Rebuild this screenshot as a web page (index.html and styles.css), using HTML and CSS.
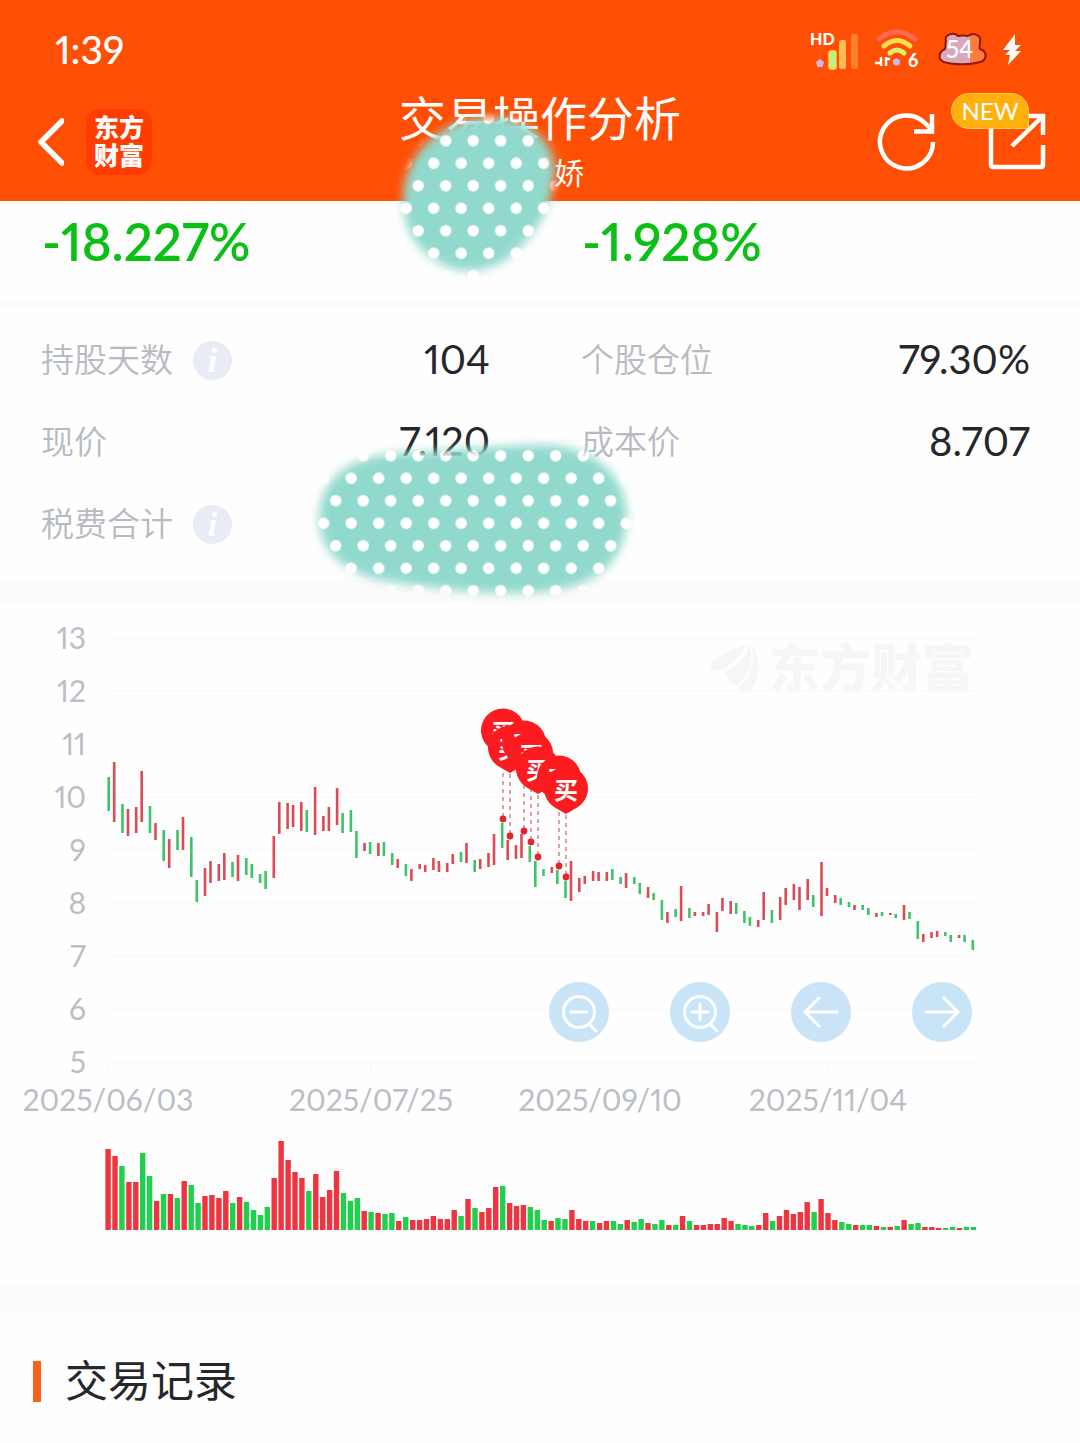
FILE: index.html
```html
<!DOCTYPE html>
<html lang="zh-CN">

<head>
  <meta charset="UTF-8" />
  <meta name="viewport" content="width=device-width, initial-scale=1.0" />
  <title>交易操作分析</title>
  <link rel="stylesheet" href="styles.css">
</head>

<body>
  <header class="header">
    <div class="status">
      <span class="time">1:39</span>
      <div class="status-icons">
        <svg class="signal" width="50" height="44" viewBox="0 0 50 44">
          <text class="hd" x="0" y="17">HD</text>
          <path d="M10 31l4 3-1.500 5h-5l-1.500-5z" fill="#c9b8e8" />
          <rect x="19" y="23" width="7" height="18" rx="2" fill="#b4f58c" stroke="#ffd640" stroke-width="1.500" />
          <rect x="29" y="12" width="7" height="29" rx="2" fill="#ffbe55" />
          <rect x="41" y="6" width="7" height="35" rx="2" fill="#ff7f2a" />
        </svg>
        <svg class="wifi" width="46" height="44" viewBox="0 0 46 44">
          <g fill="none" stroke-linecap="round" stroke-width="5">
            <path d="M5 11q17-14 36 0" stroke="#ff6a58" />
            <path d="M10 18q13-11 26 0" stroke="#ffe14d" />
            <path d="M16 25q7-6 14 0" stroke="#d8f06a" />
          </g>
          <path d="M7 29v9M1 35h5M12 38v-9M12 31h4" fill="none" stroke="#fff" stroke-width="2.500" />
          <circle cx="22.500" cy="34" r="3.500" fill="#c9b8e8" />
          <text class="six" x="34" y="39">6</text>
        </svg>
        <svg class="battery" width="50" height="36" viewBox="0 0 50 36">
          <path d="M8 9C6 2 16 0 20 4q5-1 10 0c5-4 14-1 12 6 0 3-1 5 0 7 8 3 7 11 0 13-10 3-26 3-36 0-6-2-6-10 1-13 1-3 0-5 1-8z" fill="#ff7a3c" />
          <path d="M8 9C6 2 16 0 20 4q5-1 12 0v28q-16 1-26-2c-6-2-6-10 1-13 1-3 0-5 1-8z" fill="#d9a9bb" />
          <path d="M8 9C6 2 16 0 20 4q5-1 10 0c5-4 14-1 12 6 0 3-1 5 0 7 8 3 7 11 0 13-10 3-26 3-36 0-6-2-6-10 1-13 1-3 0-5 1-8z" fill="none" stroke="#8c1a08" stroke-width="2" />
          <text class="level" x="8" y="26">54</text>
        </svg>
        <svg class="bolt" width="20" height="32" viewBox="0 0 20 32">
          <path d="M13 0L1 16h7l-5 5h5L6 31 19 17h-6l6-6h-6z" fill="#fff" />
        </svg>
      </div>
    </div>

    <nav class="nav">
      <div class="nav-left">
        <button class="icon-btn" aria-label="返回">
          <svg width="30" height="50" viewBox="0 0 30 50">
            <path d="M28 4L7 25l21 21" fill="none" stroke="#fff" stroke-width="5.500" stroke-linecap="round" stroke-linejoin="round" />
          </svg>
        </button>
        <a class="logo" href="#">东方<br>财富</a>
      </div>
      <div class="nav-title">
        <h1>交易操作分析</h1>
        <p>娇</p>
      </div>
      <div class="nav-right">
        <button class="icon-btn" aria-label="刷新">
          <svg width="60" height="60" viewBox="0 0 60 60">
            <path d="M57 30A26.500 26.500 0 1 1 50 12L56 18M56 2V19.500H38" fill="none" stroke="#fff" stroke-width="4.500" />
          </svg>
        </button>
        <button class="icon-btn share" aria-label="分享">
          <svg width="60" height="60" viewBox="0 0 60 60">
            <path d="M5 10V53q0 2 2 2H55q2 0 2-2V33M41 4H57V23M56 5L26 34" fill="none" stroke="#fff" stroke-width="4.500" />
          </svg>
          <span class="badge">NEW</span>
        </button>
      </div>
    </nav>
  </header>

  <main>
    <section class="rates">
      <strong>-18.227%</strong>
      <strong>-1.928%</strong>
    </section>

    <section class="stats">
      <div class="stat">
        <span>持股天数</span>
        <button class="info" aria-label="说明">i</button>
        <b>104</b>
      </div>
      <div class="stat">
        <span>个股仓位</span>
        <b>79.30%</b>
      </div>
      <div class="stat">
        <span>现价</span>
        <b>7.120</b>
      </div>
      <div class="stat">
        <span>成本价</span>
        <b>8.707</b>
      </div>
      <div class="stat">
        <span>税费合计</span>
        <button class="info" aria-label="说明">i</button>
      </div>
    </section>

    <section class="chart">
      <svg id="chart" viewBox="0 604 1080 682">
        <g class="watermark">
          <path d="M711 662q18-12 35-18-10 25-35 27zM725 672q22-10 24-29 8 26-12 42-10-2-12-13zM738 688q20-18 13-45 16 24-2 50-6-1-11-5z" />
          <text x="769" y="687">东方财富</text>
        </g>
      </svg>
      <div class="tools">
        <button aria-label="缩小">
          <svg viewBox="0 0 60 60">
            <circle cx="30" cy="30" r="15.500" />
            <path d="M22 30H38M40 42L47 49" />
          </svg>
        </button>
        <button aria-label="放大">
          <svg viewBox="0 0 60 60">
            <circle cx="30" cy="30" r="15.500" />
            <path d="M22 30H38M30 22V38M40 42L47 49" />
          </svg>
        </button>
        <button aria-label="左移">
          <svg viewBox="0 0 60 60">
            <path d="M46 30H14M28 16L14 30L28 44" />
          </svg>
        </button>
        <button aria-label="右移">
          <svg viewBox="0 0 60 60">
            <path d="M14 30H46M32 16L46 30L32 44" />
          </svg>
        </button>
      </div>
    </section>

    <section class="records">
      <h2>交易记录</h2>
    </section>
  </main>

  <!-- dotted brush marks that hide private values -->
  <svg class="brush" width="680" height="640" viewBox="0 0 680 640" aria-hidden="true">
    <defs>
      <pattern id="dots" x="425.800" y="129.500" width="27.500" height="45" patternUnits="userSpaceOnUse">
        <rect width="28" height="45" fill="#92d9cd" />
        <circle cx="19.900" cy="11.200" r="5.700" fill="#fff" />
        <circle cx="7.900" cy="33.800" r="5.700" fill="#fff" />
      </pattern>
      <filter id="soft" x="-20%" y="-20%" width="140%" height="140%">
        <feGaussianBlur stdDeviation="5" />
      </filter>
      <mask id="marks" maskUnits="userSpaceOnUse" x="0" y="0" width="680" height="640">
        <g filter="url(#soft)">
          <path d="M488 117C528 115 556 142 555 172C553 205 538 233 513 254C493 272 460 277 438 262C414 248 402 225 403 196C405 154 440 119 488 117Z" fill="#fff" />
          <path d="M319 520C320 476 350 458 395 453C450 452 500 444 550 445C600 449 628 480 627 520C623 568 590 588 540 592C480 596 440 588 385 581C342 573 320 550 319 520Z" fill="#fff" />
        </g>
      </mask>
    </defs>
    <rect width="680" height="640" fill="url(#dots)" mask="url(#marks)" />
  </svg>

  <script src="chart.js"></script>
</body>

</html>
```

FILE: styles.css
```css
* {
  box-sizing: border-box;
}

body {
  margin: 0;
  position: relative;
  background-color: #fefefe;
  color: #26272b;
  font-family: Lato, "Noto Sans CJK SC", sans-serif;
  font-variant-numeric: proportional-nums;
}

button {
  border: none;
  background: none;
  padding: 0;
  font-family: inherit;
  cursor: pointer;
}

svg {
  display: block;
}

.header {
  background-color: #ff4f05;
  color: white;
}

/* status bar */
.status {
  display: flex;
  justify-content: space-between;
  align-items: center;
  height: 91px;
  padding: 8px 58px 0 55px;
}

.time {
  font-size: 39px;
  font-weight: 500;
  line-height: 44px;
  padding-bottom: 2px;
}

.status-icons {
  display: flex;
  align-items: center;
  gap: 14px;
}

.wifi {
  margin-right: 4px;
}

.hd {
  font-size: 16px;
  font-weight: 900;
  fill: white;
}

.six {
  font-size: 18px;
  font-weight: 900;
  fill: white;
}

.level {
  font-size: 24px;
  font-weight: 500;
  fill: white;
}

/* nav bar */
.nav {
  display: grid;
  grid-template-columns: 1fr auto 1fr;
  align-items: center;
  height: 110px;
  padding: 0 34px;
}

.nav-left,
.nav-right {
  display: flex;
  align-items: center;
  padding-bottom: 10px;
}

.nav-left {
  gap: 22px;
}

.nav-right {
  justify-content: flex-end;
  gap: 50px;
}

.icon-btn {
  position: relative;
}

.logo {
  width: 66px;
  height: 66px;
  padding-top: 4px;
  border-radius: 14px;
  background-color: #ff3d02;
  color: white;
  font-size: 25px;
  font-weight: 900;
  line-height: 28px;
  text-align: center;
  text-decoration: none;
}

.nav-title {
  padding-bottom: 4px;
  text-align: center;
}

.nav-title h1 {
  margin: 0;
  font-size: 47px;
  font-weight: 400;
  line-height: 54px;
}

.nav-title p {
  margin: 0;
  padding-left: 58px;
  font-size: 30px;
  line-height: 54px;
}

.badge {
  position: absolute;
  top: -19px;
  right: 17px;
  width: 78px;
  height: 36px;
  border: 1px solid #ffce50;
  border-radius: 18px 18px 2px 18px;
  background-color: #ffb00c;
  color: white;
  font-size: 24px;
  line-height: 34px;
  text-align: center;
}

/* numbers */
.rates {
  display: grid;
  grid-template-columns: 1fr 1fr;
  padding-bottom: 20px;
  border-bottom: 2px solid #f9f9fa;
  color: #0cbf14;
}

.rates strong {
  padding-left: 42px;
  font-size: 51px;
  font-weight: 600;
  line-height: 82px;
}

.stats {
  display: grid;
  grid-template-columns: 1fr 1fr;
  padding: 14px 0 15px;
}

.stat {
  display: flex;
  align-items: center;
  height: 82px;
  padding: 0 50px 0 41px;
}

.stat span {
  color: #b8bac1;
  font-size: 33px;
  font-weight: 350;
  line-height: 48px;
}

.stat b {
  margin-left: auto;
  font-size: 40px;
  font-weight: 400;
  line-height: 48px;
}

.stat span,
.stat b {
  padding-bottom: 2px;
}

.info {
  width: 39px;
  height: 39px;
  margin-left: 20px;
  border-radius: 50%;
  background-color: #e9ecf5;
  color: white;
  font-family: "Liberation Serif", serif;
  font-size: 34px;
  font-style: italic;
  font-weight: bold;
  line-height: 39px;
}

/* chart */
.chart {
  position: relative;
  border-top: 24px solid #fbfbfb;
  border-bottom: 26px solid #fbfbfb;
}

.chart > svg {
  width: 100%;
}

.chart .grid {
  stroke: #fafafb;
  stroke-width: 2;
}

.chart .label {
  fill: #bcbec5;
  font-size: 30px;
}

.chart .up {
  fill: #dc4a55;
}

.chart .down {
  fill: #3cc468;
}

.chart .volume .up {
  fill: #ee343f;
}

.chart .volume .down {
  fill: #1fd04c;
}

.chart .lead {
  stroke: #dc7f88;
  stroke-width: 1.5;
  stroke-dasharray: 4 4;
}

.chart .pin {
  fill: #fc1c20;
}

.chart .point {
  fill: #e0262c;
}

.chart .pin-text {
  fill: white;
  font-size: 24px;
  font-weight: 700;
  text-anchor: middle;
}

.watermark {
  fill: #f6f6f9;
  font-size: 51px;
  font-weight: 900;
}

.tools {
  position: absolute;
  right: 10%;
  bottom: 244px;
  display: flex;
  gap: 61px;
}

.tools button {
  width: 60px;
  height: 60px;
  border-radius: 50%;
  background-color: #cae4f7;
}

.tools svg {
  fill: none;
  stroke: white;
  stroke-width: 3;
  stroke-linecap: round;
  stroke-linejoin: round;
}

/* records */
.records {
  padding: 37px 33px 28px;
}

.records h2 {
  display: flex;
  align-items: center;
  margin: 0;
  font-size: 43px;
  font-weight: 400;
  line-height: 64px;
}

.records h2::before {
  content: "";
  width: 8px;
  height: 41px;
  margin-right: 24px;
  background-color: #f8601c;
}

.brush {
  position: absolute;
  top: 0;
  left: 0;
  pointer-events: none;
}
```

FILE: chart.js
```js
// each day: direction, top, bottom
var candles = "G777-811 R762-822 G804-833 R809-836 R807-833 R771-822 G806-833 R823-840 G830-861 R839-868 " +
  "G830-850 R817-850 G837-877 G880-902 R868-896 R861-883 R864-881 R853-880 G862-877 R855-881 " +
  "G858-875 G864-878 G874-883 G871-889 R836-878 R802-834 R803-829 R805-827 R802-831 G810-832 " +
  "R787-835 R816-831 R807-831 R788-825 G813-833 G810-832 G831-858 R843-851 G842-854 R843-856 " +
  "G842-856 G853-865 R859-868 G864-876 R869-881 R864-869 R865-872 R858-870 R861-872 R863-872 " +
  "R854-864 G852-862 R843-863 G860-872 R859-869 R853-867 R834-865 G823-848 R840-860 R845-859 " +
  "R834-858 G846-862 G861-887 G869-876 R867-873 G870-884 G881-898 R861-901 R878-892 R876-884 " +
  "R871-881 R872-881 R872-881 G869-880 G877-884 R873-888 G877-884 G883-894 R887-898 G893-900 " +
  "G900-920 R912-923 G909-917 R886-921 G908-918 R912-916 R912-916 R904-915 R912-932 R898-911 " +
  "R901-914 G903-914 G911-923 G917-926 R920-927 R892-920 G910-923 R897-920 R888-905 R884-900 " +
  "R887-910 R879-900 G895-907 R862-916 R888-896 R895-903 G898-905 G902-907 R905-910 G905-910 " +
  "G908-915 R913-917 G912-916 R913-915 G914-918 R905-920 G912-919 G921-939 R934-942 R932-938 " +
  "R931-937 G932-936 G935-942 R935-938 G935-942 G940-950";

var volumes = "R81 R74 G64 R48 R48 G77 G54 R29 G36 R36 G32 R49 G45 G27 R34 R35 R32 R39 G27 R33 " +
  "G28 G20 G15 G23 R52 R89 R70 R58 R52 G39 R56 R33 R40 R59 G37 G29 G32 R19 G18 R17 " +
  "G16 G17 R9 G13 R10 R10 R11 R14 R11 R11 R20 G14 R31 G22 R18 R22 R43 G44 R27 R24 " +
  "R25 G23 G20 G10 R9 G12 G11 R20 R11 R9 G9 R7 R9 G9 G6 R10 G8 G11 R7 G6 " +
  "G10 R5 G5 R14 G9 R5 R5 R6 R6 R12 R9 G6 G5 G4 R5 R17 G9 R14 R20 R16 " +
  "R18 R28 G18 R31 R17 R10 G8 G6 R5 G5 G5 R4 G3 R3 G4 R10 G6 G7 R3 R3 " +
  "R2 G2 G3 R2 G3 G3";

var buys = [[503, 819], [510, 836], [524, 831], [531, 842], [538, 857], [559, 866], [566, 877]];
var dates = [["2025/06/03", 108], ["2025/07/25", 371], ["2025/09/10", 600], ["2025/11/04", 828]];

var out = "";

// price axis
for (var price = 13; price >= 5; price--) {
  var y = 638 + (13 - price) * 53;
  out += '<line class="grid" x1="108" x2="975" y1="' + y + '" y2="' + y + '"/>';
  out += '<text class="label" text-anchor="end" x="86" y="' + (y + 11) + '">' + price + '</text>';
}

dates.forEach(function (d) {
  out += '<line class="grid" x1="' + d[1] + '" x2="' + d[1] + '" y1="1062" y2="1076"/>';
  out += '<text class="label" text-anchor="middle" x="' + d[1] + '" y="1111">' + d[0] + '</text>';
});

candles.split(" ").forEach(function (c, i) {
  var range = c.slice(1).split("-");
  var x = 107.4 + 2.752 * Math.floor(i * 2.5152 + 0.03);
  out += '<rect class="' + (c[0] === "R" ? "up" : "down") + '" x="' + x.toFixed(1) + '" y="' + range[0] +
    '" width="2.6" height="' + (range[1] - range[0]) + '"/>';
});

out += '<g class="volume">';
volumes.split(" ").forEach(function (v, i) {
  var h = Number(v.slice(1));
  out += '<rect class="' + (v[0] === "R" ? "up" : "down") + '" x="' + (105.4 + i * 6.922).toFixed(1) + '" y="' + (1230 - h) +
    '" width="5.4" height="' + h + '"/>';
});
out += '</g>';

// buy pins, later ones lie over earlier ones
buys.forEach(function (b) {
  var x = b[0];
  var cy = b[1] - 88;
  out += '<line class="lead" x1="' + x + '" x2="' + x + '" y1="' + (cy + 26) + '" y2="' + b[1] + '"/>';
  out += '<circle class="point" cx="' + x + '" cy="' + b[1] + '" r="3.4"/>';
});
buys.forEach(function (b) {
  var x = b[0];
  var cy = b[1] - 88;
  out += '<path class="pin" d="M' + x + ' ' + (cy + 25) + 'l-12 -7a22 22 0 1 1 24 0z"/>';
  out += '<text class="pin-text" x="' + x + '" y="' + (cy + 10) + '">买</text>';
});

document.getElementById("chart").insertAdjacentHTML("beforeend", out);
```
